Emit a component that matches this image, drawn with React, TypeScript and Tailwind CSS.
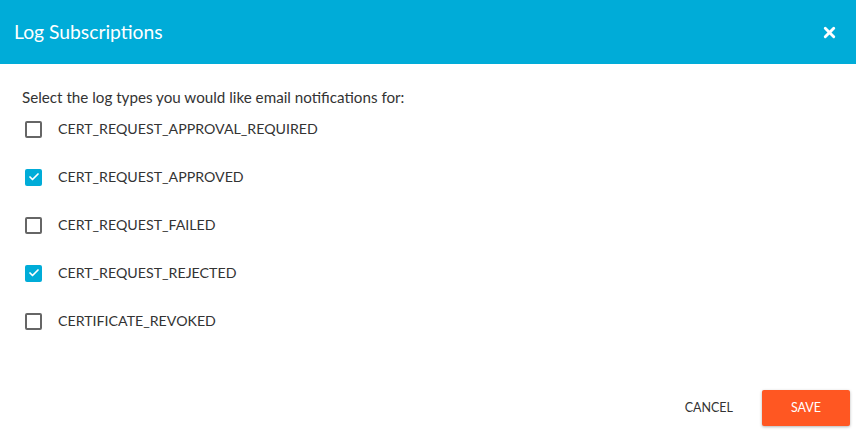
import { useState } from 'react'
import { X, Check } from 'lucide-react'

const LOG_TYPES = [
  'CERT_REQUEST_APPROVAL_REQUIRED',
  'CERT_REQUEST_APPROVED',
  'CERT_REQUEST_FAILED',
  'CERT_REQUEST_REJECTED',
  'CERTIFICATE_REVOKED',
]

export default function App() {
  const [checked, setChecked] = useState<Record<string, boolean>>({
    CERT_REQUEST_APPROVED: true,
    CERT_REQUEST_REJECTED: true,
  })

  function toggle(t: string) {
    setChecked(prev => ({ ...prev, [t]: !prev[t] }))
  }

  return (
    <div className="w-[856px] h-[442px] bg-white flex flex-col" style={{ fontFamily: 'Lato, "Open Sans", sans-serif' }}>
      {/* Header */}
      <div className="h-[64px] shrink-0 bg-[#00acd8] flex items-center justify-between pl-[14px] pr-[18px]">
        <h2 className="text-white text-[19.3px] font-normal">Log Subscriptions</h2>
        <button className="text-white">
          <X className="w-[17px] h-[17px]" strokeWidth={4} />
        </button>
      </div>

      {/* Body */}
      <div className="flex-1 pt-[24px] pl-[22px]">
        <p className="text-[15.2px] text-[#333] leading-[18px]">Select the log types you would like email notifications for:</p>
        <div className="-mt-[1px] flex flex-col">
          {LOG_TYPES.map(t => (
            <label key={t} className="h-[48px] flex items-center gap-[16px] pl-[3px] cursor-pointer" onClick={() => toggle(t)}>
              {checked[t] ? (
                <span className="w-[17px] h-[17px] rounded-[2px] bg-[#00acd8] flex items-center justify-center">
                  <Check className="w-[12px] h-[12px] text-white" strokeWidth={3.5} />
                </span>
              ) : (
                <span className="w-[17px] h-[17px] rounded-[2px] border-2 border-[#666]" />
              )}
              <span className="text-[14.2px] text-[#333]">{t}</span>
            </label>
          ))}
        </div>
      </div>

      {/* Footer */}
      <div className="flex justify-end items-center gap-[29px] pr-[6px] pb-[16px]">
        <button className="text-[12.5px] text-[#333]">CANCEL</button>
        <button className="w-[88px] h-[36px] bg-[#ff5722] text-white text-[12.5px] rounded-[2px] shadow-[0_1px_3px_rgba(0,0,0,0.3)]">SAVE</button>
      </div>
    </div>
  )
}
